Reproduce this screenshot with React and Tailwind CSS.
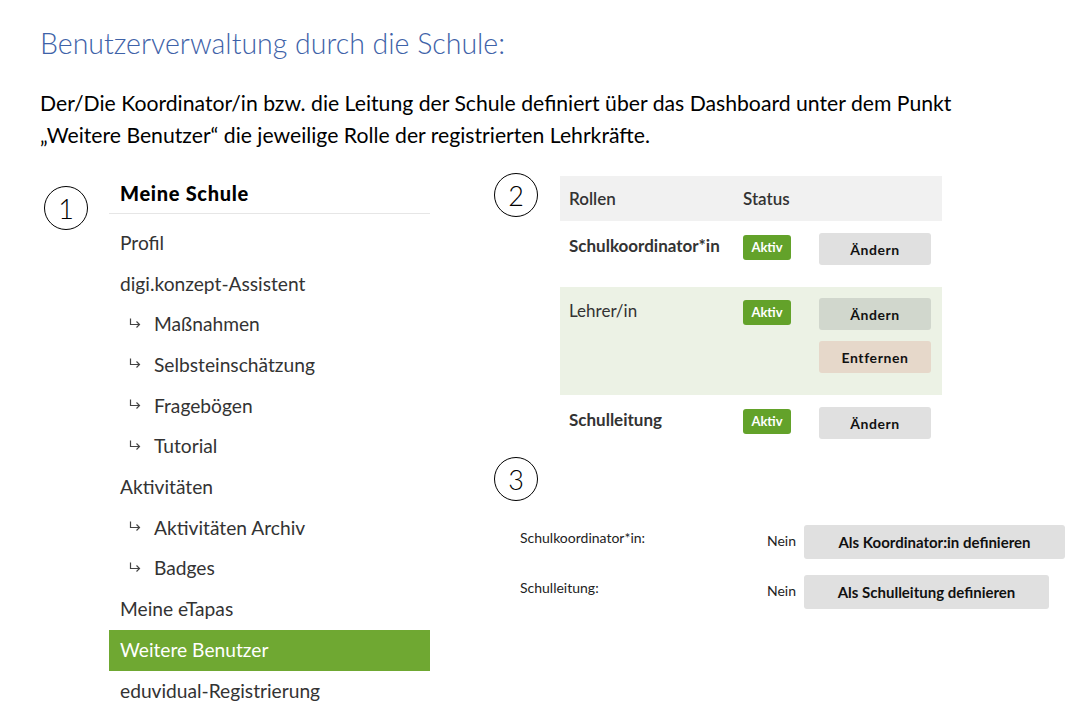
import React from 'react';

const menu = [
  { label: 'Profil' },
  { label: 'digi.konzept-Assistent' },
  { label: 'Maßnahmen', sub: true },
  { label: 'Selbsteinschätzung', sub: true },
  { label: 'Fragebögen', sub: true },
  { label: 'Tutorial', sub: true },
  { label: 'Aktivitäten' },
  { label: 'Aktivitäten Archiv', sub: true },
  { label: 'Badges', sub: true },
  { label: 'Meine eTapas' },
  { label: 'Weitere Benutzer', active: true },
  { label: 'eduvidual-Registrierung' },
];

function Step({ n }) {
  return (
    <div className="w-[44px] h-[44px] rounded-full border border-black flex items-center justify-center text-[27px] font-light text-black leading-none shrink-0">
      {n}
    </div>
  );
}

// little "↳" hook arrow in front of sub items
function SubArrow() {
  return (
    <svg width="12" height="10" viewBox="0 0 12 10" className="mr-[13px] -mt-[4px] shrink-0" fill="none" stroke="#444" strokeWidth="1.2">
      <path d="M1.5 0.5V6.5H10.5" />
      <path d="M7.5 3.5L10.5 6.5L7.5 9.5" />
    </svg>
  );
}

function Aktiv() {
  return (
    <span className="inline-flex items-center justify-center w-[48px] h-[25px] rounded-[3px] bg-[#63a22a] text-white text-[13px] font-bold">
      Aktiv
    </span>
  );
}

function Btn({ children, tone = 'bg-[#e0e0e0]' }) {
  return (
    <button className={`w-[112px] h-[32px] rounded-[3px] ${tone} text-[14px] font-bold text-[#111] tracking-[0.6px]`}>
      {children}
    </button>
  );
}

export default function App() {
  return (
    <div className="w-[1092px] h-[720px] bg-white pl-[40px] pt-[27px] font-['Lato',sans-serif] text-black overflow-hidden">
      <h1 className="text-[28.5px] leading-[32px] text-[#3e62a8] font-light">Benutzerverwaltung durch die Schule:</h1>
      <p className="mt-[28px] text-[21.2px] leading-[32px]">
        Der/Die Koordinator/in bzw. die Leitung der Schule definiert über das Dashboard unter dem Punkt
        <br />
        „Weitere Benutzer“ die jeweilige Rolle der registrierten Lehrkräfte.
      </p>

      <div className="flex mt-[21px]">
        {/* 1 - Menü */}
        <div className="ml-[4px] mt-[14px]"><Step n="1" /></div>
        <div className="ml-[21px] w-[321px] text-[#333]">
          <div className="h-[42px] flex items-center pl-[11px] border-b border-[#e6e6e6] text-[20px] font-black tracking-[0.7px] text-black">
            Meine Schule
          </div>
          <div className="mt-[9px]">
            {menu.map((m) => (
              <div
                key={m.label}
                className={`h-[40.7px] flex items-center text-[19.2px] ${m.active ? 'bg-[#6fa832] text-white pl-[11px]' : m.sub ? 'pl-[20px]' : 'pl-[11px]'}`}
              >
                {m.sub && <SubArrow />}
                {m.label}
              </div>
            ))}
          </div>
        </div>

        {/* 2 + 3 */}
        <div className="ml-[64px]">
          <div className="flex">
            <div className="mt-[1px]"><Step n="2" /></div>
            <div className="ml-[22px] mt-[4px] w-[382px] text-[#333] text-[17px]">
              <div className="h-[45px] bg-[#f1f1f1] flex items-center font-semibold">
                <span className="pl-[9px] w-[183px]">Rollen</span>
                <span>Status</span>
              </div>
              <div className="h-[66px] flex pt-[12px]">
                <span className="pl-[9px] w-[183px] font-bold">Schulkoordinator*in</span>
                <div className="w-[76px]"><Aktiv /></div>
                <Btn>Ändern</Btn>
              </div>
              <div className="h-[108px] flex pt-[11px] bg-[#ecf2e5]">
                <span className="pl-[9px] w-[183px]">Lehrer/in</span>
                <div className="w-[76px]"><Aktiv /></div>
                <div className="flex flex-col gap-[11px]">
                  <Btn tone="bg-[#d1d7cd]">Ändern</Btn>
                  <Btn tone="bg-[#e6d8ca]">Entfernen</Btn>
                </div>
              </div>
              <div className="h-[56px] flex pt-[12px]">
                <span className="pl-[9px] w-[183px] font-bold">Schulleitung</span>
                <div className="w-[76px]"><Aktiv /></div>
                <Btn>Ändern</Btn>
              </div>
            </div>
          </div>

          <div className="mt-[6px]"><Step n="3" /></div>
          <div className="ml-[26px] mt-[24px] text-[14px] text-[#222] flex flex-col gap-[16px]">
            <div className="flex items-center h-[34px]">
              <span className="w-[247px] -mt-[9px]">Schulkoordinator*in:</span>
              <span className="w-[37px] -mt-[4px]">Nein</span>
              <button className="w-[261px] h-[34px] bg-[#e0e0e0] rounded-[3px] font-bold text-[15px] text-[#111]">Als Koordinator:in definieren</button>
            </div>
            <div className="flex items-center h-[34px]">
              <span className="w-[247px] -mt-[9px]">Schulleitung:</span>
              <span className="w-[37px] -mt-[4px]">Nein</span>
              <button className="w-[245px] h-[34px] bg-[#e0e0e0] rounded-[3px] font-bold text-[15px] text-[#111]">Als Schulleitung definieren</button>
            </div>
          </div>
        </div>
      </div>
    </div>
  );
}
